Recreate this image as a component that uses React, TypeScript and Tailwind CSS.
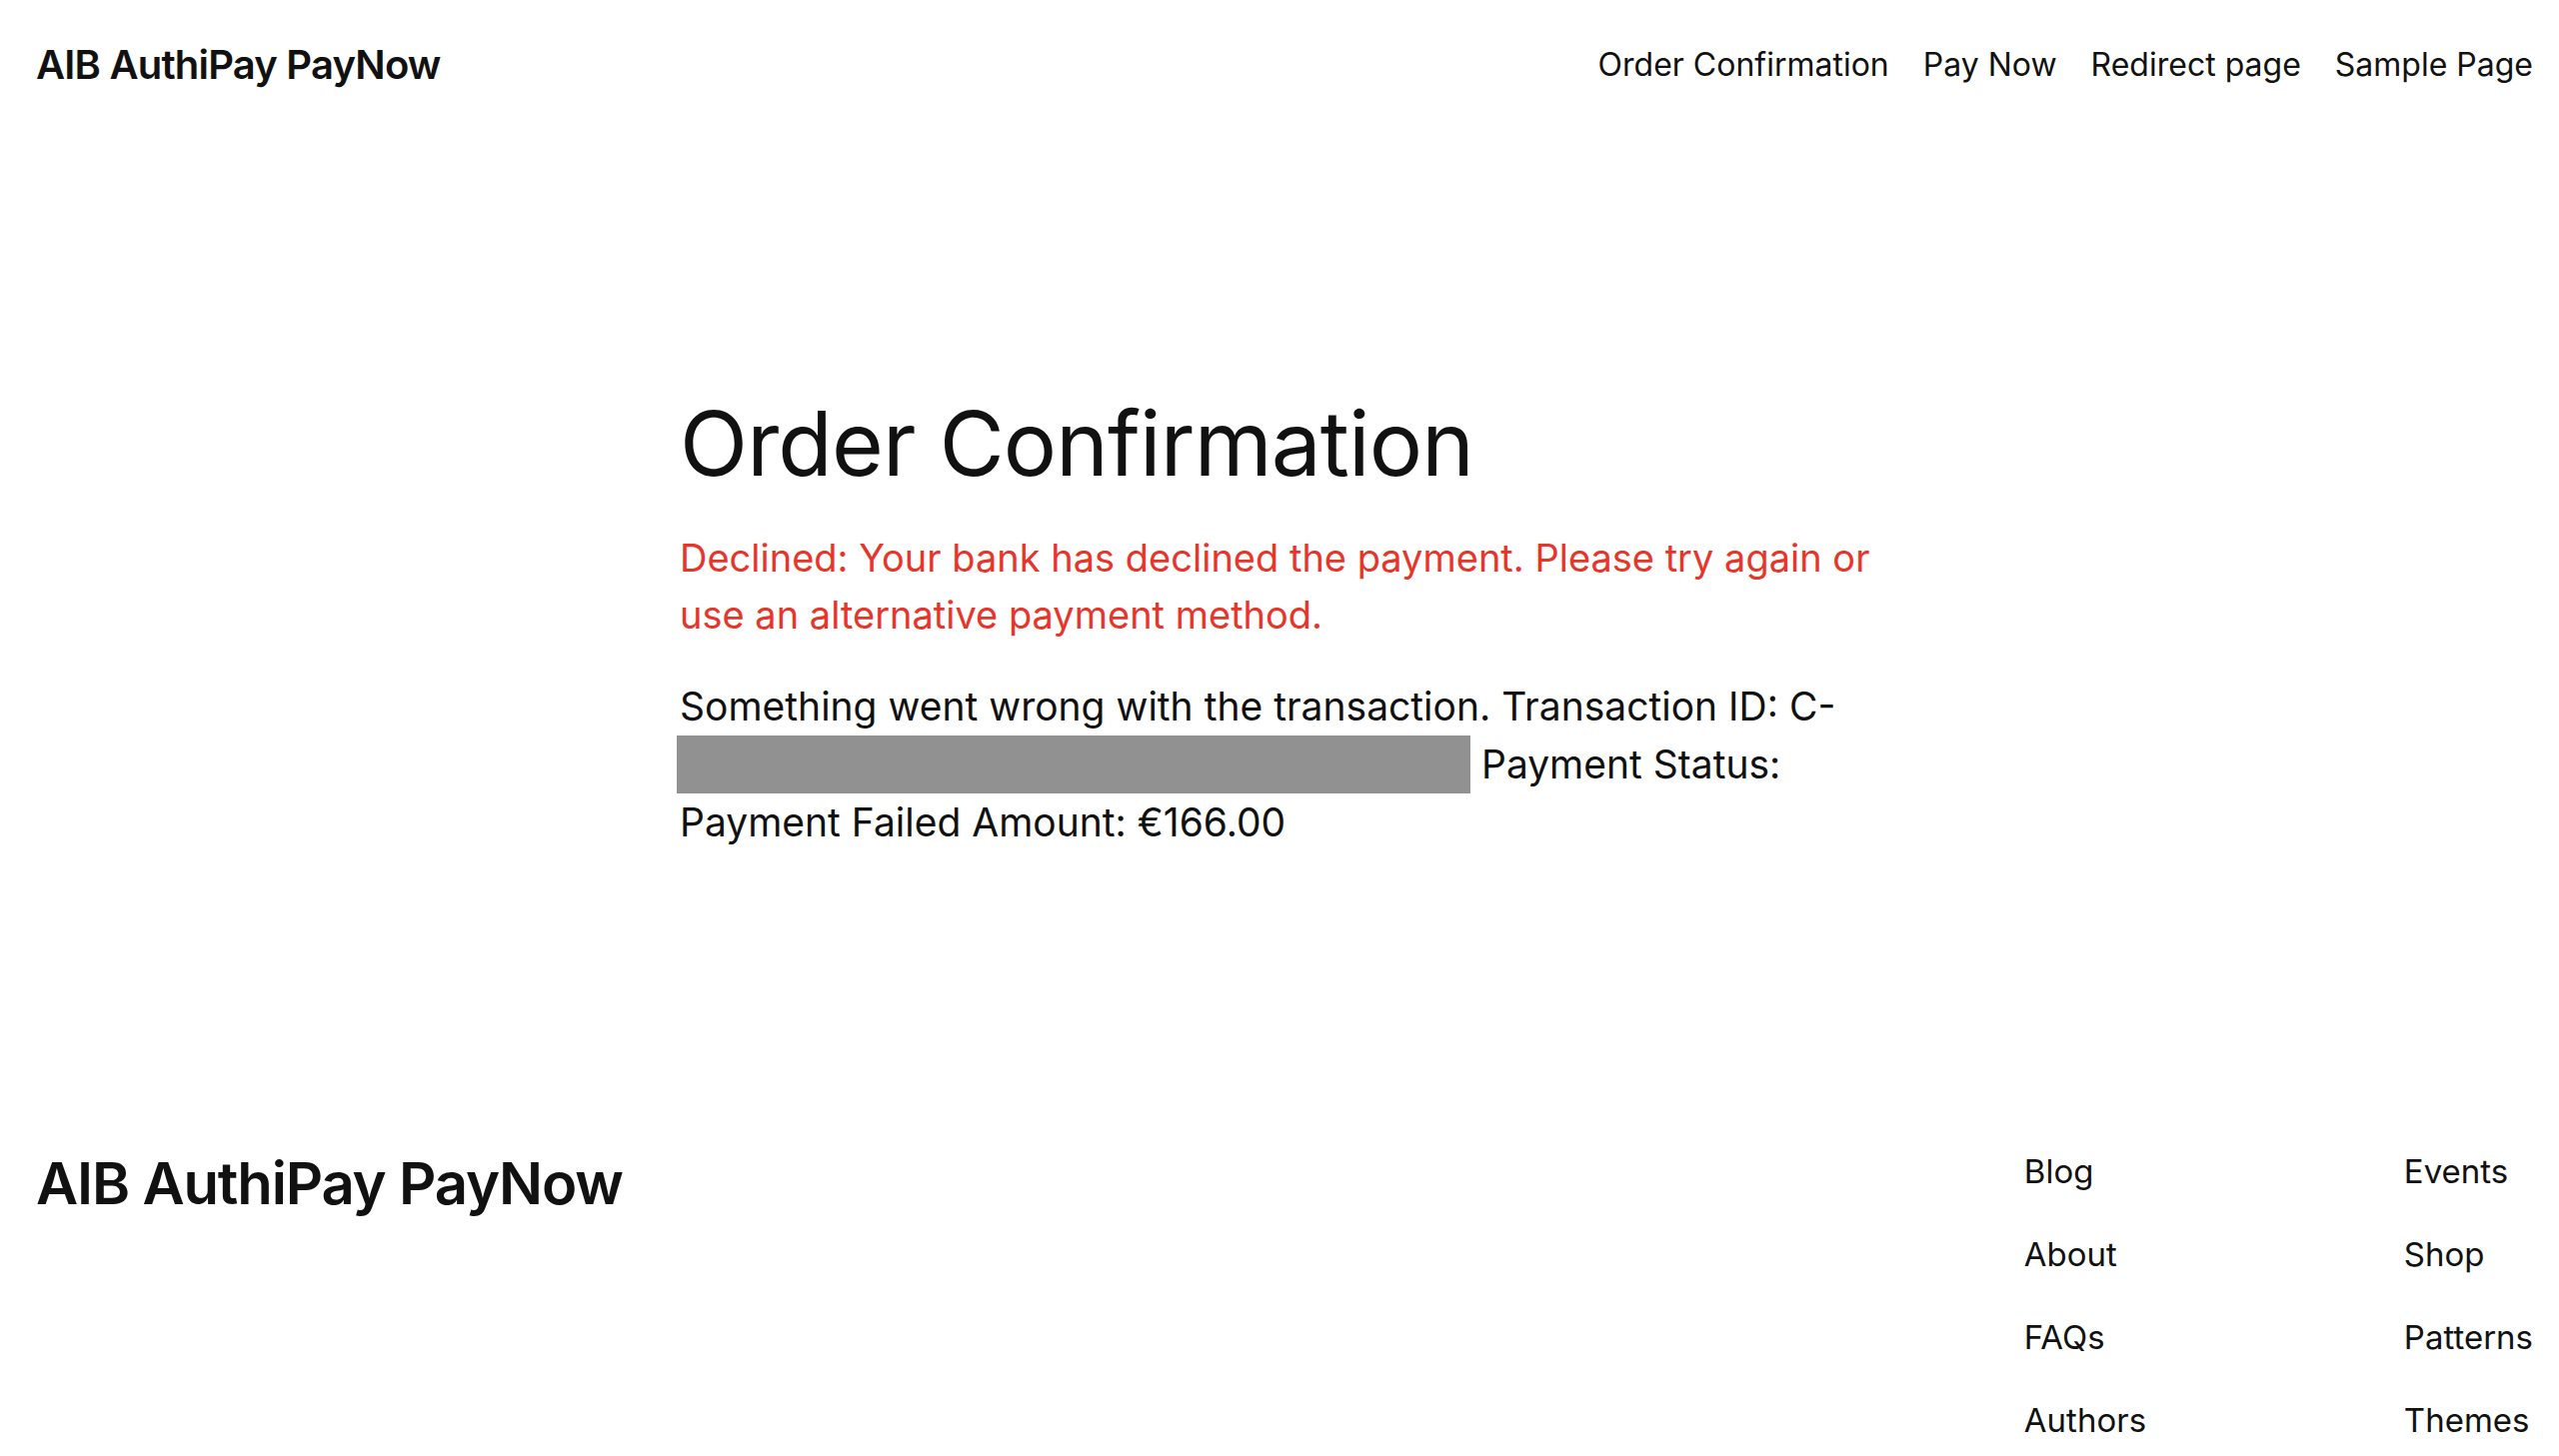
export default function App() {
  const nav = ["Order Confirmation", "Pay Now", "Redirect page", "Sample Page"]
  const colA = ["Blog", "About", "FAQs", "Authors"]
  const colB = ["Events", "Shop", "Patterns", "Themes"]

  return (
    <div className="min-h-screen bg-white text-[#111111] font-['Inter',sans-serif]">
      {/* Header */}
      <header className="flex h-[130px] items-center justify-between pl-[36px] pr-[26px]">
        <div className="text-[40px] font-semibold tracking-[-0.02em]">AIB AuthiPay PayNow</div>
        <nav className="flex items-center gap-[34px] text-[32px]">
          {nav.map((item) => (
            <a key={item} href="#">
              {item}
            </a>
          ))}
        </nav>
      </header>

      {/* Content */}
      <main className="mx-auto w-[1200px] pt-[261px] pb-[298px]">
        <h1 className="text-[89px] leading-[1.2] tracking-[-0.01em]">Order Confirmation</h1>
        <p className="mt-[32px] text-[38px] leading-[57px] text-[#e8352b]">
          Declined: Your bank has declined the payment. Please try again or
          <br />
          use an alternative payment method.
        </p>
        <p className="mt-[34px] text-[39px] leading-[58px]">
          Something went wrong with the transaction. Transaction ID: C-
          <br />
          <span className="ml-[-3px] inline-block h-[58px] w-[794px] bg-[#919191] align-top" /> Payment Status:
          <br />
          Payment Failed Amount: €166.00
        </p>
      </main>

      {/* Footer */}
      <footer className="flex justify-between pl-[36px] pr-[26px]">
        <div className="pt-[5px] text-[58px] font-semibold leading-none tracking-[-0.02em]">AIB AuthiPay PayNow</div>
        <div className="grid grid-cols-[380px_auto] gap-y-[39px] text-[33px] leading-[44px]">
          {colA.map((a, i) => (
            <div key={a} className="contents">
              <a href="#">{a}</a>
              <a href="#">{colB[i]}</a>
            </div>
          ))}
        </div>
      </footer>
    </div>
  )
}
